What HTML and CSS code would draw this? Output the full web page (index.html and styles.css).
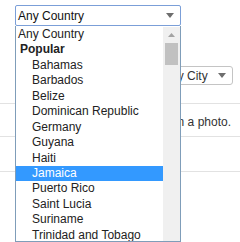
FILE: index.html
```html
<!DOCTYPE html>
<html lang="en">
<head>
    <meta charset="UTF-8">
    <meta name="viewport" content="width=device-width, initial-scale=1.0">
    <title>Find a Country</title>
    <link rel="stylesheet" href="styles.css">
</head>
<body>
    <div class="page">
        <div class="country-select">
            <span>Any Country</span>
            <svg class="caret" width="8" height="5" viewBox="0 0 8 5"><path d="M0 0H8L4 5Z"/></svg>
        </div>

        <div class="city-row">
            <div class="city-select">
                <span>Any City</span>
                <svg class="caret" width="8" height="5" viewBox="0 0 8 5"><path d="M0 0H8L4 5Z"/></svg>
            </div>
        </div>

        <div class="feed">
            <div class="feed-row first">Share your trip in a photo.</div>
            <div class="feed-row second"></div>
            <div class="feed-row third"></div>
        </div>
    </div>

    <!-- open dropdown of the country picker -->
    <div class="dropdown">
        <ul class="options">
            <li class="opt top">Any Country</li>
            <li class="opt group">Popular</li>
            <li class="opt">Bahamas</li>
            <li class="opt">Barbados</li>
            <li class="opt">Belize</li>
            <li class="opt">Dominican Republic</li>
            <li class="opt">Germany</li>
            <li class="opt">Guyana</li>
            <li class="opt">Haiti</li>
            <li class="opt selected">Jamaica</li>
            <li class="opt">Puerto Rico</li>
            <li class="opt">Saint Lucia</li>
            <li class="opt">Suriname</li>
            <li class="opt">Trinidad and Tobago</li>
        </ul>
        <div class="scrollbar">
            <div class="scroll-up">
                <svg width="7" height="4" viewBox="0 0 7 4"><path d="M0 4H7L3.5 0Z"/></svg>
            </div>
            <div class="thumb"></div>
        </div>
    </div>
</body>
</html>
```

FILE: styles.css
```css
html, body {
    overflow: hidden;
}
body {
    font-family: "Liberation Sans", Arial, sans-serif;
    font-size: 12px;
    color: #222;
    background-color: #ffffff;
    margin: 0;
    position: relative;
    height: 242px;
}
.page {
    padding: 5px 7px 0 15px;
}
.country-select {
    display: flex;
    align-items: center;
    box-sizing: border-box;
    width: 166px;
    height: 21px;
    padding: 0 6px 0 2px;
    border: 1px solid #7b9fd8;
    border-radius: 2px;
    color: #111;
}
.caret {
    margin-left: auto;
    fill: #6e6e6e;
}
.city-row {
    display: flex;
    justify-content: flex-end;
    margin-top: 40px;
}
.city-select {
    display: flex;
    align-items: center;
    box-sizing: border-box;
    width: 74px;
    height: 19px;
    padding: 0 6px 0 3px;
    border: 1px solid #c4c4c4;
    border-radius: 3px;
    color: #333;
}
.feed {
    margin: 18px -7px 0 -15px;
}
.feed-row {
    border-top: 1px solid #e2e2e2;
    box-sizing: border-box;
    color: #333;
}
.feed-row.first {
    height: 33px;
    padding: 11px 9px 0 0;
    text-align: right;
    line-height: 14px;
}
.feed-row.second {
    height: 35px;
}
.feed-row.third {
    height: 40px;
}
.dropdown {
    position: absolute;
    top: 26px;
    left: 15px;
    width: 166px;
    height: 216px;
    box-sizing: border-box;
    display: flex;
    background-color: #ffffff;
    border: 1px solid #7f9db9;
    border-top: none;
    padding-top: 1px;
}
.options {
    list-style: none;
    margin: 0;
    padding: 0;
    flex: 1;
    overflow: hidden;
}
.opt {
    height: 15.45px;
    line-height: 15.45px;
    padding-left: 16px;
    white-space: nowrap;
    color: #222;
}
.opt.top {
    padding-left: 2px;
}
.opt.group {
    padding-left: 4px;
    font-weight: bold;
}
.opt.selected {
    background-color: #3399ff;
    color: #ffffff;
}
.scrollbar {
    width: 17px;
    background-color: #f0f0f0;
}
.scroll-up {
    display: flex;
    align-items: center;
    justify-content: center;
    height: 16px;
    fill: #a3a3a3;
}
.thumb {
    margin: 0 2px;
    height: 22px;
    background-color: #c1c1c1;
}
```
